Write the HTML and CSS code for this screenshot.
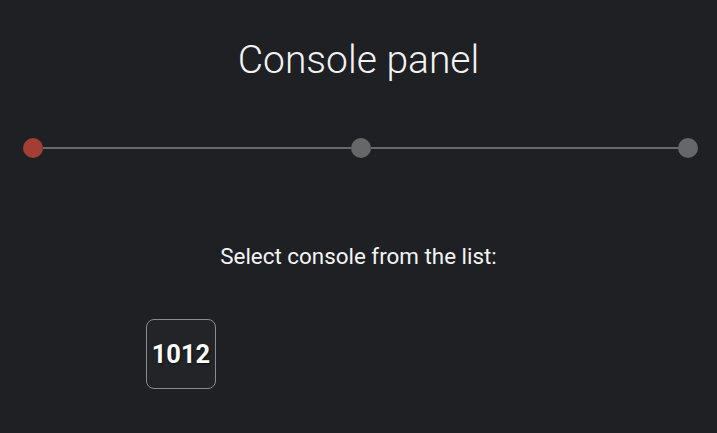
FILE: index.html
```html
<!DOCTYPE html>
<html>
<head>
<meta charset="utf-8">
<link rel="stylesheet" href="styles.css">
</head>
<body>
<div class="page">
  <h1 class="title">Console panel</h1>
  <div class="stepper">
    <span class="dot dot-active"></span>
    <span class="line"></span>
    <span class="dot"></span>
    <span class="line"></span>
    <span class="dot"></span>
  </div>
  <p class="prompt">Select console from the list:</p>
  <div class="list">
    <button class="console-btn">1012</button>
  </div>
</div>
</body>
</html>
```

FILE: styles.css
```css
html, body {
  margin: 0;
  padding: 0;
  background: #1e2024;
  height: 100%;
}
.page {
  font-family: Roboto, "Liberation Sans", sans-serif;
  color: #ffffff;
  padding-top: 38px;
}
.title {
  margin: 0;
  text-align: center;
  font-weight: 300;
  font-size: 39px;
  line-height: 44px;
  color: #f2f2f2;
}
.stepper {
  display: flex;
  align-items: center;
  margin: 56px 19px 0 23px;
}
.dot {
  width: 20px;
  height: 20px;
  border-radius: 50%;
  background: #666769;
  flex: none;
}
.dot-active {
  background: #a23e33;
}
.line {
  flex: 1;
  height: 2px;
  background: #68696b;
}
.prompt {
  margin: 85px 0 0;
  text-align: center;
  font-size: 22.4px;
  line-height: 26px;
  color: #f4f4f4;
}
.list {
  display: flex;
  padding-left: 146px;
  margin-top: 50px;
}
.console-btn {
  width: 70px;
  height: 70px;
  box-sizing: border-box;
  border: 1px solid #8a8b8d;
  border-radius: 8px;
  background: #232428;
  color: #ffffff;
  font-family: Roboto, "Liberation Sans", sans-serif;
  font-weight: 700;
  font-size: 25.5px;
  padding: 0;
  text-shadow: 1px 1px 2px rgba(0, 0, 0, 0.6);
}
```
